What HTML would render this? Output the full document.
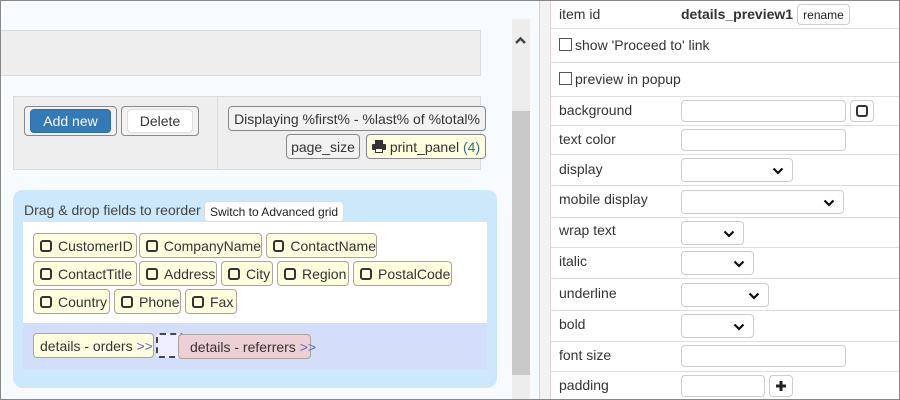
<!DOCTYPE html>
<html><head><meta charset="utf-8"><style>
*{box-sizing:border-box}
body{margin:0;width:900px;height:400px;overflow:hidden;font-family:"Liberation Sans",Arial,sans-serif;font-size:14px;color:#333;background:#f7fbfe;position:relative}
.a{position:absolute}
.frame{left:0;top:0;width:900px;height:400px;border:1px solid #888;z-index:10;pointer-events:none}
.chip{position:absolute;height:25px;border:1px solid #aaa49a;border-radius:4px;background:#ffffe0;display:flex;align-items:center;padding-left:6px;font-size:14px;color:#333;white-space:nowrap}
.cb{display:inline-block;width:12px;height:12px;border:2.5px solid #333;border-radius:3px;margin-right:6px}
.btn{position:absolute;border:1px solid #999;border-radius:4px;background:#f2f2f2;display:flex;align-items:center;justify-content:center;white-space:nowrap}
.row{position:absolute;left:551px;width:349px;border-bottom:1px solid #ddd}
.lbl{position:absolute;left:559px;font-size:14px;color:#333}
.inp{position:absolute;left:681px;height:22px;border:1px solid #ccc;border-radius:4px;background:#fff}
.sel{position:absolute;left:681px;height:24px;border:1px solid #ccc;border-radius:4px;background:#fff}
.sel svg{position:absolute;right:8px;top:8px}
.chk{display:inline-block;width:13px;height:13px;border:1px solid #555;vertical-align:-1px;margin-right:3px;background:#fff}
</style></head><body>
<div class="a frame"></div>
<div class="a" style="left:0;top:30px;width:481px;height:46px;background:#eee;border:1px solid #d8dde2;border-left:none"></div>
<div class="a" style="left:13px;top:96px;width:468px;height:74px;background:#eee;border:1px solid #d8dde2"></div>
<div class="a" style="left:217px;top:97px;width:1px;height:72px;background:#d8dde2"></div>
<div class="btn" style="left:24px;top:106px;width:93px;height:30px;background:#f2f2f2;border-color:#888"></div>
<div class="btn" style="left:30px;top:109px;width:81px;height:24px;background:#337ab7;border-color:#2e6da4;color:#fff">Add new</div>
<div class="btn" style="left:121px;top:106px;width:78px;height:30px;border-color:#888"></div>
<div class="btn" style="left:127px;top:109px;width:66px;height:24px;background:#fff;border-color:#ddd">Delete</div>
<div class="btn" style="left:228px;top:106px;width:258px;height:25px;border-color:#888">Displaying %first% - %last% of %total%</div>
<div class="btn" style="left:286px;top:134px;width:74px;height:25px;border-color:#888">page_size</div>
<div class="btn" style="left:366px;top:134px;width:120px;height:25px;border-color:#888;background:#ffffe0"><svg width="14" height="13" viewBox="0 0 14 13" style="margin-right:4px"><rect x="3" y="0" width="8" height="4" fill="#333"/><rect x="0" y="4" width="14" height="6" rx="1" fill="#333"/><rect x="3" y="8" width="8" height="5" fill="#333"/><rect x="4" y="9" width="6" height="3" fill="#ffffe0"/></svg>print_panel&nbsp;<span style="color:#31708f">(4)</span></div>

<div class="a" style="left:13px;top:190px;width:484px;height:198px;background:#cce8fa;border-radius:10px"></div>
<div class="a" style="left:24px;top:202px;font-size:14px;color:#444">Drag &amp; drop fields to reorder</div>
<div class="btn" style="left:204px;top:201px;width:140px;height:21px;background:#fff;border-color:#ddd;font-size:12px;color:#222">Switch to Advanced grid</div>
<div class="a" style="left:23px;top:222px;width:464px;height:101px;background:#fff"></div>
<div class="a" style="left:23px;top:323px;width:464px;height:46px;background:#d3defa"></div>

<div class="chip" style="left:33px;top:233px;width:104px"><span class="cb"></span>CustomerID</div>
<div class="chip" style="left:139px;top:233px;width:123px"><span class="cb"></span>CompanyName</div>
<div class="chip" style="left:266px;top:233px;width:111px"><span class="cb"></span>ContactName</div>
<div class="chip" style="left:33px;top:261px;width:104px"><span class="cb"></span>ContactTitle</div>
<div class="chip" style="left:139px;top:261px;width:78px"><span class="cb"></span>Address</div>
<div class="chip" style="left:221px;top:261px;width:52px"><span class="cb"></span>City</div>
<div class="chip" style="left:277px;top:261px;width:72px"><span class="cb"></span>Region</div>
<div class="chip" style="left:353px;top:261px;width:99px"><span class="cb"></span>PostalCode</div>
<div class="chip" style="left:33px;top:289px;width:77px"><span class="cb"></span>Country</div>
<div class="chip" style="left:114px;top:289px;width:67px"><span class="cb"></span>Phone</div>
<div class="chip" style="left:185px;top:289px;width:52px"><span class="cb"></span>Fax</div>

<div class="chip" style="left:33px;top:333px;width:121px">details - orders&nbsp;<span style="color:#5c6bc0">&gt;&gt;</span></div>
<div class="a" style="left:156px;top:333px;width:28px;height:25px;border:2px dashed #445;border-radius:4px;background:#eef"></div>
<div class="chip" style="left:178px;top:334px;width:133px;background:#ecd0d6;padding-left:11px">details - referrers&nbsp;<span style="color:#5c6bc0">&gt;&gt;</span></div>

<div class="a" style="left:512px;top:19px;width:18px;height:381px;background:#ededed"></div>
<div class="a" style="left:512px;top:111px;width:18px;height:264px;background:#c8c8c8"></div>
<svg class="a" style="left:514px;top:36px" width="13" height="9" viewBox="0 0 13 9"><path d="M2 7 L6.5 2.5 L11 7" stroke="#444" stroke-width="2.5" fill="none"/></svg>
<div class="a" style="left:539px;top:0;width:1px;height:400px;background:#d4d4d4"></div>
<div class="a" style="left:540px;top:0;width:11px;height:400px;background:#f2f2f2"></div>

<div class="a" style="left:550px;top:0;width:350px;height:400px;background:#fff;border-left:1px solid #e8cfd6"></div>
<div class="row" style="top:0;height:29px"></div>
<div class="row" style="top:29px;height:34px"></div>
<div class="row" style="top:63px;height:34px"></div>
<div class="row" style="top:97px;height:29px"></div>
<div class="row" style="top:126px;height:29px"></div>
<div class="row" style="top:155px;height:31px"></div>
<div class="row" style="top:186px;height:32px"></div>
<div class="row" style="top:218px;height:30px"></div>
<div class="row" style="top:248px;height:31px"></div>
<div class="row" style="top:279px;height:32px"></div>
<div class="row" style="top:311px;height:31px"></div>
<div class="row" style="top:342px;height:30px"></div>

<div class="lbl" style="top:6px">item id</div>
<div class="a" style="left:681px;top:6px;font-weight:bold;color:#333">details_preview1</div>
<div class="btn" style="left:797px;top:4px;width:53px;height:21px;background:#fff;border-color:#ccc;font-size:12px;color:#222">rename</div>
<div class="lbl" style="top:37px"><span class="chk"></span>show 'Proceed to' link</div>
<div class="lbl" style="top:71px"><span class="chk"></span>preview in popup</div>
<div class="lbl" style="top:102px">background</div>
<div class="inp" style="top:100px;width:165px"></div>
<div class="btn" style="left:850px;top:100px;width:24px;height:22px;background:#fff;border-color:#ccc"><span class="cb" style="margin:0"></span></div>
<div class="lbl" style="top:131px">text color</div>
<div class="inp" style="top:129px;width:165px"></div>
<div class="lbl" style="top:161px">display</div>
<div class="sel" style="top:158px;width:112px"><svg width="12" height="8" viewBox="0 0 12 8"><path d="M1.5 1.5 L6 6 L10.5 1.5" stroke="#111" stroke-width="2.2" fill="none"/></svg></div>
<div class="lbl" style="top:191px">mobile display</div>
<div class="sel" style="top:190px;width:163px"><svg width="12" height="8" viewBox="0 0 12 8"><path d="M1.5 1.5 L6 6 L10.5 1.5" stroke="#111" stroke-width="2.2" fill="none"/></svg></div>
<div class="lbl" style="top:222px">wrap text</div>
<div class="sel" style="top:221px;width:63px"><svg width="12" height="8" viewBox="0 0 12 8"><path d="M1.5 1.5 L6 6 L10.5 1.5" stroke="#111" stroke-width="2.2" fill="none"/></svg></div>
<div class="lbl" style="top:253px">italic</div>
<div class="sel" style="top:251px;width:73px"><svg width="12" height="8" viewBox="0 0 12 8"><path d="M1.5 1.5 L6 6 L10.5 1.5" stroke="#111" stroke-width="2.2" fill="none"/></svg></div>
<div class="lbl" style="top:285px">underline</div>
<div class="sel" style="top:283px;width:88px"><svg width="12" height="8" viewBox="0 0 12 8"><path d="M1.5 1.5 L6 6 L10.5 1.5" stroke="#111" stroke-width="2.2" fill="none"/></svg></div>
<div class="lbl" style="top:316px">bold</div>
<div class="sel" style="top:314px;width:73px"><svg width="12" height="8" viewBox="0 0 12 8"><path d="M1.5 1.5 L6 6 L10.5 1.5" stroke="#111" stroke-width="2.2" fill="none"/></svg></div>
<div class="lbl" style="top:347px">font size</div>
<div class="inp" style="top:345px;width:165px"></div>
<div class="lbl" style="top:377px">padding</div>
<div class="inp" style="top:375px;width:84px"></div>
<div class="btn" style="left:769px;top:375px;width:24px;height:22px;background:#fff;border-color:#ccc"><svg width="12" height="12" viewBox="0 0 12 12"><path d="M6 1 V11 M1 6 H11" stroke="#222" stroke-width="3"/></svg></div>
</body></html>
